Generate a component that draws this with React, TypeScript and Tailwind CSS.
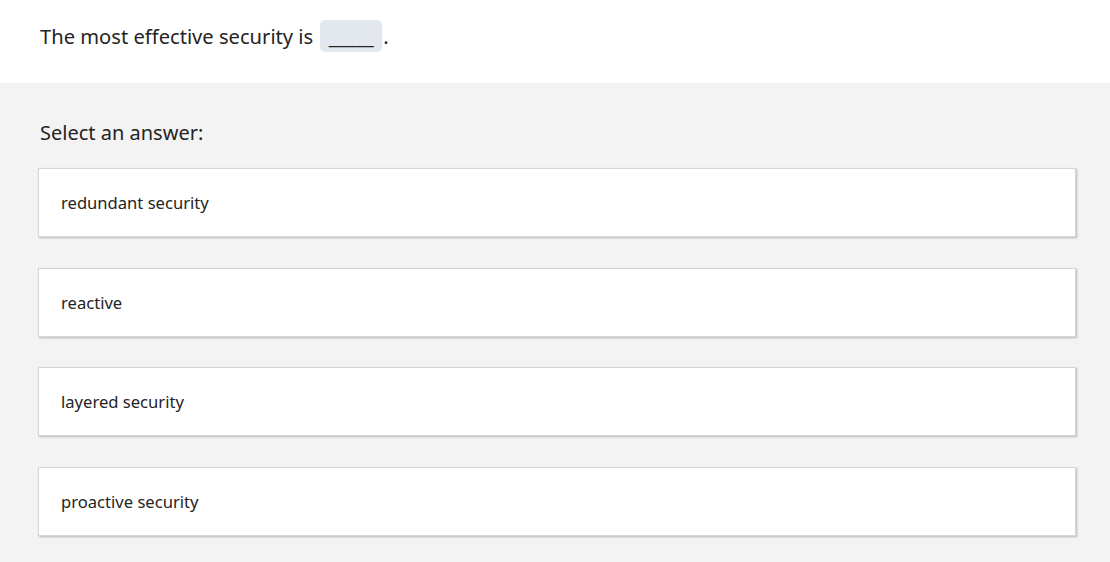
export default function App() {
  const options = [
    { t: "redundant security", m: "mt-0" },
    { t: "reactive", m: "mt-[31px]" },
    { t: "layered security", m: "mt-[30px]" },
    { t: "proactive security", m: "mt-[31px]" },
  ];
  return (
    <div className="w-[1110px] h-[562px] overflow-hidden bg-[#f3f3f3] text-[#242424]" style={{ fontFamily: '"Noto Sans", "Open Sans", sans-serif' }}>
      <div className="bg-white h-[83px] pl-[40px] pt-[20px]">
        <div className="flex items-center text-[20.15px] leading-[32px]">
          <span>The most effective security is</span>
          <span className="ml-[7px] h-[32px] w-[62px] rounded-[5px] bg-[#e3e8ee] flex items-center justify-center">_____</span>
          <span className="ml-[1px]">.</span>
        </div>
      </div>
      <div className="pl-[38px] pt-[36px]">
        <div className="pl-[2px] text-[20px] leading-[28px] mb-[21px]">Select an answer:</div>
        <div className="flex flex-col">
          {options.map((o) => (
            <div key={o.t} className={`${o.m} w-[1038px] h-[69px] bg-white border border-[#d6d6d6] shadow-[1px_1px_2px_rgba(0,0,0,0.25)] flex items-center pl-[22px] pt-[1px] text-[16.6px]`}>
              {o.t}
            </div>
          ))}
        </div>
      </div>
    </div>
  );
}
